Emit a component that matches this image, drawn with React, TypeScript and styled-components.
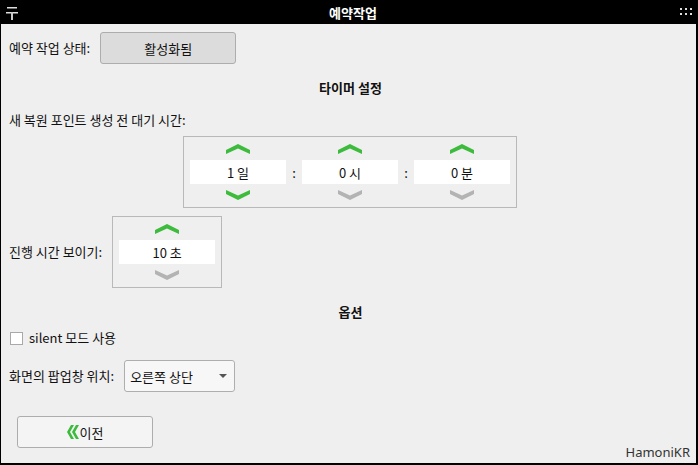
import React from 'react'
import styled, { createGlobalStyle } from 'styled-components';

const GlobalStyle = createGlobalStyle`
	html, body {
		margin: 0;
		padding: 0;
		background: #000;
	}
	body {
		font-family: "Noto Sans CJK KR", "Noto Sans", sans-serif;
		font-size: 13px;
		color: #111;
	}
`;

type SpinnerProps = {
	value: string;
	canDown?: boolean;
}

const Chevron = ({ up, active }: { up?: boolean; active?: boolean }) => (
	<ArrowSvg viewBox="0 0 24 10" width="24" height="10">
		<polygon
			points={up ? '0,6 12,0 24,6 24,10 12,4.5 0,10' : '0,0 12,5.5 24,0 24,4 12,10 0,4'}
			fill={active ? '#3cbb3c' : '#b3b3b3'}
		/>
	</ArrowSvg>
);

const Spinner = ({ value, canDown }: SpinnerProps) => (
	<SpinnerColumn>
		<Chevron up active />
		<SpinField>{value}</SpinField>
		<Chevron active={canDown} />
	</SpinnerColumn>
);

export default function App() {
	return <Window>
		<GlobalStyle />
		<TitleBar>
			<svg width="12" height="14" viewBox="0 0 12 14">
				<rect x="1" y="0" width="10" height="1.5" fill="#ddd" />
				<rect x="0" y="5" width="12" height="1.5" fill="#ddd" />
				<rect x="5" y="5" width="2" height="8" fill="#ccc" />
			</svg>
			<Title>예약작업</Title>
			<svg width="12" height="8" viewBox="0 0 12 8">
				{[0, 5, 10].map(x => [0, 5].map(y => <rect key={`${x}-${y}`} x={x} y={y} width="2" height="2" fill="#ddd" />))}
			</svg>
		</TitleBar>
		<Content>
			<Row style={{ marginTop: 8 }}>
				<Label>예약 작업 상태:</Label>
				<StateButton>활성화됨</StateButton>
			</Row>
			<SectionTitle style={{ marginTop: 15 }}>타이머 설정</SectionTitle>
			<LineLabel style={{ marginTop: 14 }}>새 복원 포인트 생성 전 대기 시간:</LineLabel>
			<Centered>
				<GroupBox>
					<Spinner value="1 일" canDown />
					<Colon>:</Colon>
					<Spinner value="0 시" />
					<Colon>:</Colon>
					<Spinner value="0 분" />
				</GroupBox>
			</Centered>
			<Row style={{ marginTop: 8 }}>
				<Label>진행 시간 보이기:</Label>
				<GroupBox>
					<Spinner value="10 초" />
				</GroupBox>
			</Row>
			<SectionTitle style={{ marginTop: 15 }}>옵션</SectionTitle>
			<CheckRow>
				<CheckBox />
				<span>silent 모드 사용</span>
			</CheckRow>
			<Row style={{ marginTop: 13 }}>
				<Label>화면의 팝업창 위치:</Label>
				<Combo>
					<span>오른쪽 상단</span>
					<ComboArrow />
				</Combo>
			</Row>
			<BottomRow>
				<PrevButton>
					<svg width="12" height="14" viewBox="0 0 12 14">
						<polygon points="4,0 7,0 3,7 7,14 4,14 0,7" fill="#3cbb3c" />
						<polygon points="9,0 12,0 8,7 12,14 9,14 5,7" fill="#3cbb3c" />
					</svg>
					<span>이전</span>
				</PrevButton>
				<Brand>HamoniKR</Brand>
			</BottomRow>
		</Content>
	</Window>;
}

// ================== styled elements =====================

const Window = styled('div')`
	display: flex;
	flex-direction: column;
	width: 698px;
	height: 465px;
	box-sizing: border-box;
	padding: 0 2px 2px 1px;
	background: #000;
`;

const TitleBar = styled('div')`
	display: flex;
	align-items: center;
	justify-content: space-between;
	height: 24px;
	padding: 0 6px 0 6px;
	margin-left: -1px;
	margin-right: -2px;
	svg {display: block;}
	svg:first-child {margin-top: 3px;}
`;

const Title = styled('div')`
	color: #fff;
	font-weight: 700;
	font-size: 13px;
	margin-left: 8px;
`;

const Content = styled('div')`
	flex: 1;
	display: flex;
	flex-direction: column;
	background: #efefef;
	padding: 0 6px 0 8px;
`;

const Row = styled('div')`
	display: flex;
	align-items: center;
	gap: 10px;
`;

const Label = styled('div')`
	line-height: 18px;
	white-space: nowrap;
`;

const LineLabel = styled('div')`
	line-height: 18px;
`;

const SectionTitle = styled('div')`
	text-align: center;
	font-weight: 700;
	line-height: 18px;
	padding-left: 2px;
`;

const StateButton = styled('div')`
	width: 136px;
	height: 32px;
	box-sizing: border-box;
	display: flex;
	align-items: center;
	justify-content: center;
	background: #dcdcdc;
	border: 1px solid #adadad;
	border-radius: 3px;
`;

const Centered = styled('div')`
	display: flex;
	justify-content: center;
	margin-top: 7px;
	padding-left: 1px;
`;

const GroupBox = styled('div')`
	display: flex;
	align-items: center;
	border: 1px solid #b9b9b9;
	padding: 7px 6px 7px 6px;
`;

const SpinnerColumn = styled('div')`
	display: flex;
	flex-direction: column;
	align-items: center;
	gap: 6px;
`;

const ArrowSvg = styled('svg')`
	display: block;
`;

const SpinField = styled('div')`
	width: 96px;
	height: 24px;
	display: flex;
	align-items: center;
	justify-content: center;
	background: #fff;
	color: #111;
`;

const Colon = styled('div')`
	width: 16px;
	text-align: center;
`;

const CheckRow = styled('div')`
	display: flex;
	align-items: center;
	gap: 6px;
	margin-top: 8px;
	line-height: 18px;
`;

const CheckBox = styled('div')`
	width: 13px;
	height: 13px;
	box-sizing: border-box;
	background: #fff;
	border: 1px solid #a9a9a9;
	margin-left: 1px;
`;

const Combo = styled('div')`
	width: 111px;
	height: 32px;
	box-sizing: border-box;
	display: flex;
	align-items: center;
	justify-content: space-between;
	padding: 0 7px 0 5px;
	background: #f7f7f7;
	border: 1px solid #aeaeae;
	border-radius: 3px;
`;

const ComboArrow = styled('div')`
	width: 0;
	height: 0;
	border-left: 4px solid transparent;
	border-right: 4px solid transparent;
	border-top: 4px solid #555;
`;

const BottomRow = styled('div')`
	display: flex;
	justify-content: space-between;
	align-items: flex-start;
	margin-top: 24px;
`;

const PrevButton = styled('div')`
	width: 136px;
	height: 32px;
	box-sizing: border-box;
	margin-left: 8px;
	display: flex;
	align-items: center;
	justify-content: center;
	gap: 1px;
	background: #f4f4f4;
	border: 1px solid #adadad;
	border-radius: 3px;
	svg {display: block;}
`;

const Brand = styled('div')`
	margin-top: 27px;
	line-height: 18px;
	color: #333;
	font-family: "Noto Sans", sans-serif;
`;
